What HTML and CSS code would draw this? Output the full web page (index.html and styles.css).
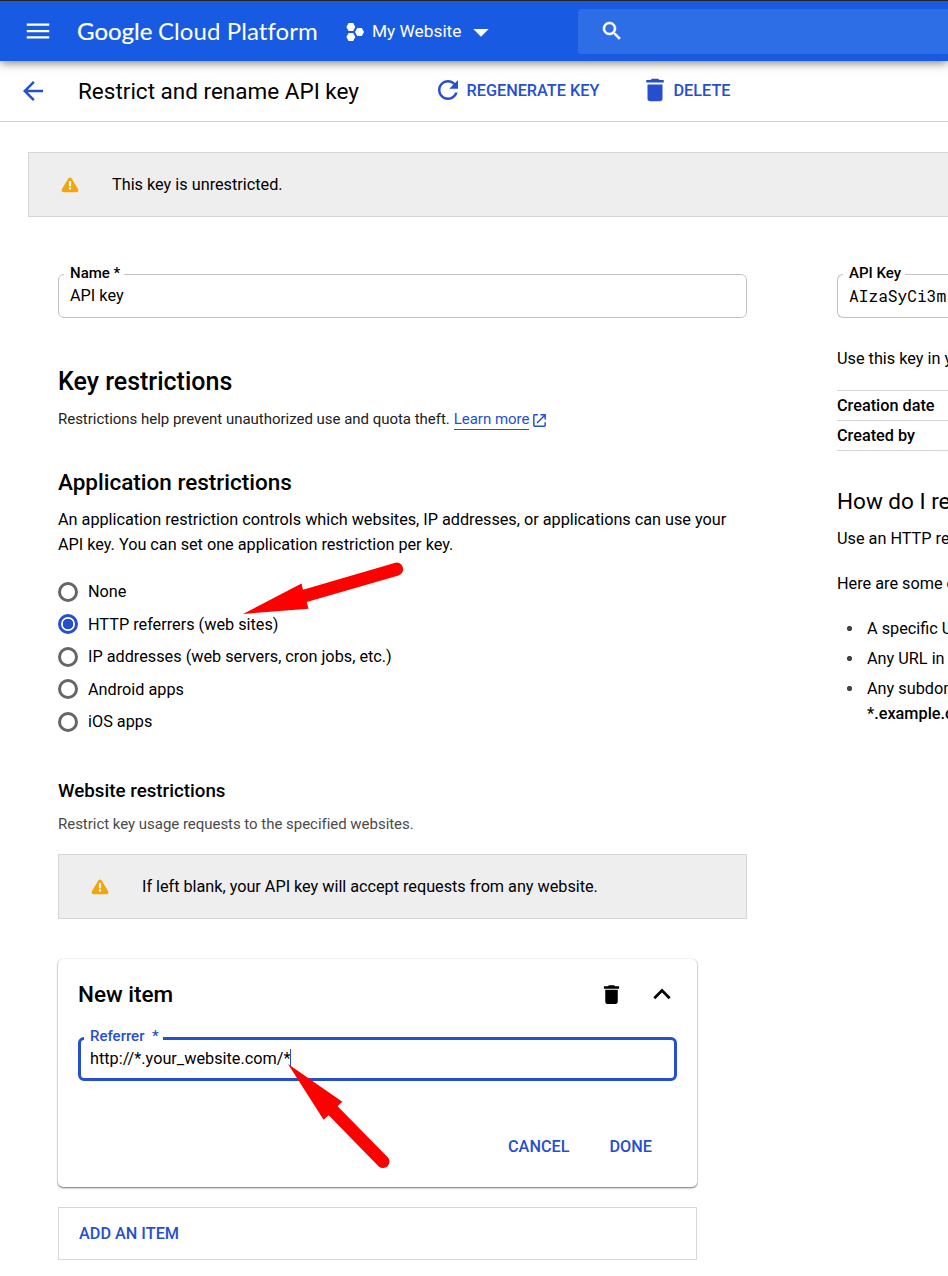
FILE: index.html
```html
<!DOCTYPE html>
<html lang="en">
<head>
<meta charset="utf-8">
<title>Restrict and rename API key</title>
<link rel="stylesheet" href="styles.css">
</head>
<body>
<div class="page">
  <header class="topbar">
    <svg class="icon menu" viewBox="0 0 24 24"><path d="M3 18h18v-1.800H3V18zm0-5.100h18v-1.800H3v1.800zM3 6v1.800h18V6H3z"/></svg>
    <div class="brand"><span class="brand-google">Google</span><span class="brand-cloud">Cloud Platform</span></div>
    <div class="project">
      <svg class="hex" viewBox="0 0 18 20"><path d="M2.600 1h4.600l2.100 4-2.100 4H2.600L.4 5zM2.600 11h4.600l2.100 4-2.100 4H2.600L.4 15zM11.200 6h4.600L18 10l-2.200 4h-4.600L9 10z"/></svg>
      <span class="project-name">My Website</span>
      <svg class="caret" viewBox="0 0 16 8"><path d="M.3 0h15.400L8 7.800z"/></svg>
    </div>
    <div class="search">
      <svg class="icon-search" viewBox="0 0 24 24"><path d="M15.5 14h-.79l-.28-.27C15.41 12.59 16 11.11 16 9.5 16 5.91 13.09 3 9.5 3S3 5.91 3 9.5 5.91 16 9.5 16c1.61 0 3.09-.59 4.23-1.57l.27.28v.79l5 4.99L20.49 19l-4.99-5zm-6 0C7.01 14 5 11.99 5 9.5S7.01 5 9.5 5 14 7.01 14 9.5 11.99 14 9.5 14z"/></svg>
    </div>
  </header>
  <div class="toolbar">
    <svg class="icon back" viewBox="0 0 24 24"><path d="M20 11H7.83l5.59-5.59L12 4l-8 8 8 8 1.41-1.41L7.83 13H20v-2z"/></svg>
    <h1 class="title">Restrict and rename API key</h1>
    <a class="tool regenerate"><svg class="icon" viewBox="0 0 24 24"><path d="M17.65 6.35C16.2 4.9 14.21 4 12 4c-4.42 0-7.99 3.58-7.99 8s3.57 8 7.99 8c3.73 0 6.84-2.55 7.73-6h-2.08c-.82 2.33-3.04 4-5.65 4-3.31 0-6-2.69-6-6s2.69-6 6-6c1.66 0 3.14.69 4.22 1.78L13 11h7V4l-2.35 2.35z"/></svg><span class="regenerate-text">REGENERATE KEY</span></a>
    <a class="tool delete"><svg class="icon" viewBox="0 0 24 24"><path d="M6 19c0 1.1.9 2 2 2h8c1.1 0 2-.9 2-2V7.600H6V19zM19 4h-3.500l-1-1h-5l-1 1H5v2h14V4z"/></svg><span class="delete-text">DELETE</span></a>
  </div>
  <div class="notice notice-top">
    <svg class="warn" viewBox="0 0 18 16"><path class="warn-fill" d="M7.300 1.500Q9-.6 10.700 1.500L17.200 12.300Q18 15.200 15.300 15.200H2.700Q0 15.200.8 12.300z"/><path class="warn-mark" d="M7.900 4h2.200v5.300H7.900zM7.900 10.600h2.200v2H7.900z"/></svg>
    <span class="notice-text-top">This key is unrestricted.</span>
  </div>
  <div class="columns">
    <main class="main">
      <div class="field"><label class="label">Name *</label><span class="value">API key</span></div>
      <h2 class="h-key">Key restrictions</h2>
      <p class="help">Restrictions help prevent unauthorized use and quota theft. <a class="link">Learn more</a><svg class="ext" viewBox="0 0 14 14"><path d="M5.200.9H1.600Q.9.900.9 1.600V12.400q0 .7.7.7H12.400q.7 0 .7-.7V8.800M8 .9h5.100V6M13 1 4.300 9.700"/></svg></p>
      <h3 class="h-app">Application restrictions</h3>
      <p class="body-text app-text">An application restriction controls which websites, IP addresses, or applications can use your<br>API key. You can set one application restriction per key.</p>
      <ul class="radios">
        <li class="radio"><i class="dot"></i>None</li>
        <li class="radio"><i class="dot dot-on"></i>HTTP referrers (web sites)</li>
        <li class="radio"><i class="dot"></i>IP addresses (web servers, cron jobs, etc.)</li>
        <li class="radio"><i class="dot"></i>Android apps</li>
        <li class="radio"><i class="dot"></i>iOS apps</li>
      </ul>
      <h4 class="h-web">Website restrictions</h4>
      <p class="sub">Restrict key usage requests to the specified websites.</p>
      <div class="notice notice-inner">
        <svg class="warn" viewBox="0 0 18 16"><path class="warn-fill" d="M7.300 1.500Q9-.6 10.700 1.500L17.200 12.300Q18 15.200 15.300 15.200H2.700Q0 15.200.8 12.300z"/><path class="warn-mark" d="M7.900 4h2.200v5.300H7.900zM7.900 10.600h2.200v2H7.900z"/></svg>
        <span class="notice-text-inner">If left blank, your API key will accept requests from any website.</span>
      </div>
      <section class="card">
        <div class="card-head">
          <h3 class="card-title">New item</h3>
          <svg class="trash" viewBox="0 0 24 24"><path d="M6 19c0 1.100.9 2 2 2h8c1.100 0 2-.9 2-2V7.400H6V19zM19.300 4h-3.800l-1-1h-5l-1 1H4.700v2.400h14.600V4z"/></svg>
          <svg class="chevron" viewBox="0 0 18 12"><path d="M1.300 10.200 9 2.500l7.700 7.700"/></svg>
        </div>
        <div class="field field-active"><label class="label label-active">Referrer&nbsp; *</label><span class="value value-ref">http://*.your_website.com/*</span><i class="cursor"></i></div>
        <div class="actions"><a class="cancel">CANCEL</a><a class="done">DONE</a></div>
      </section>
      <div class="add"><span class="add-text">ADD AN ITEM</span></div>
    </main>
    <aside class="side">
      <div class="field"><label class="label label-api">API Key</label><span class="value mono">AIzaSyCi3m</span></div>
      <p class="body-text use">Use this key in y</p>
      <div class="meta"><div class="row">Creation date</div><div class="row">Created by</div></div>
      <h3 class="h-how">How do I re</h3>
      <p class="body-text">Use an HTTP re</p>
      <p class="body-text here">Here are some e</p>
      <ul class="bullets">
        <li class="bullet">A specific U</li>
        <li class="bullet">Any URL in</li>
        <li class="bullet">Any subdom<br><b class="strong">*.example.c</b></li>
      </ul>
    </aside>
  </div>
  <svg class="arrows" viewBox="0 0 948 1276">
    <path d="M243 614 301.500 583.500 303 589.800 394.500 562.900A6.600 6.600 0 0 1 398.500 575.500L306.700 602 308.500 608.700z"/>
    <path d="M288 1064 342.300 1101.700 337.600 1106.300 388.200 1157.700A6.500 6.500 0 0 1 379 1166.700L328.700 1115.300 323.600 1119.700z"/>
  </svg>
</div>
</body>
</html>
```
FILE: styles.css
```css
* { box-sizing: border-box; margin: 0; padding: 0; }
body { background: #fff; color: #000; font-family: Roboto, "Liberation Sans", sans-serif; font-size: 16.25px; line-height: 25px; }
ul { list-style: none; }
svg { display: block; flex: none; }
.page { position: relative; width: 948px; height: 1276px; overflow: hidden; white-space: nowrap; }
.icon { width: 30px; height: 30px; fill: currentColor; }

.topbar { position: relative; display: flex; align-items: center; height: 61px; border-top: 1px solid #222; background: #185ae1; color: #fff; padding-left: 23px; box-shadow: 0 1px 10px rgba(0,0,0,.6); }
.brand { display: flex; gap: 7px; width: 246px; margin-left: 24px; font-family: Lato, sans-serif; font-size: 24px; line-height: 30px; }
.brand-google { width: 74px; font-weight: 400; -webkit-text-stroke: .2px #fff; }
.brand-cloud { letter-spacing: .08px; }
.project { display: flex; align-items: center; width: 232px; margin-left: 23px; }
.hex { width: 18px; height: 20px; margin-top: 2px; fill: #fff; }
.project-name { width: 90px; margin-left: 8px; font-size: 17.3px; }
.caret { width: 16px; height: 8px; margin: 4px 0 0 11px; fill: #fff; }
.search { flex: 1; height: 45px; border-radius: 3px 0 0 3px; background: #2d6de6; padding: 10px 21.5px; }
.icon-search { width: 24px; height: 24px; fill: #fff; stroke: #fff; stroke-width: .5; }

.toolbar { display: flex; align-items: center; height: 61px; border-bottom: 1px solid #d2d2d2; padding-left: 18px; color: #264fd0; }
.title { width: 355px; margin-left: 30px; font-size: 22.5px; font-weight: 400; color: #000; }
.tool { display: flex; align-items: center; font-weight: 500; margin-top: -2px; }
.regenerate { width: 207px; }
.regenerate-text { margin-left: 3.5px; }
.delete-text { margin-left: 3.5px; }

.notice { display: flex; align-items: center; height: 65px; border: 1px solid #d5d5d5; background: #eee; padding-left: 32px; }
.notice-top { margin: 30px 0 0 28px; border-right: 0; }
.notice-text-inner { letter-spacing: -.025px; }
.warn { width: 18px; height: 16px; margin: 1px 33px 0 0; }
.warn-fill { fill: #f2a60d; }
.warn-mark { fill: #fff; }

.columns { display: grid; grid-template-columns: 689px 111px; column-gap: 90px; padding: 57px 0 0 58px; }
.field { position: relative; height: 44px; border: 1px solid #c2c2c2; border-radius: 6px; padding: 8px 11px; }
.side .field { border-right: 0; border-radius: 6px 0 0 6px; }
.label { position: absolute; left: 5px; top: -11px; height: 18px; padding: 0 4px 0 6px; background: #fff; font-size: 15px; line-height: 18px; font-weight: 500; }
.value { display: inline-block; }
.mono { font-family: "Roboto Mono", "DejaVu Sans Mono", monospace; font-size: 16.2px; }

.h-key { margin-top: 49px; font-size: 25px; line-height: 30px; font-weight: 500; }
.help { display: flex; margin-top: 12px; font-size: 15px; line-height: 20px; letter-spacing: -.023px; color: #212121; }
.link { height: 21px; margin-left: 4px; border-bottom: 1px solid #264fd0; color: #264fd0; }
.ext { width: 13px; height: 13px; margin: 5px 0 0 4px; fill: none; stroke: #264fd0; stroke-width: 1.6; }
.h-app { margin-top: 37px; font-size: 22.5px; line-height: 30px; font-weight: 500; }
.app-text { margin-top: 10px; letter-spacing: -.016px; }
.radios { margin-top: 18.4px; }
.radio { display: flex; align-items: center; height: 32.5px; }
.dot { width: 20px; height: 20px; margin-right: 10px; border: 3px solid #666; border-radius: 50%; }
.dot-on { border-color: #264fd0; background: radial-gradient(circle, #264fd0 5px, #fff 5.6px); }
.h-web { margin-top: 40.9px; font-size: 18.75px; font-weight: 500; }
.sub { margin-top: 10.5px; font-size: 15px; line-height: 20px; letter-spacing: -.03px; color: #4a4a4a; }
.notice-inner { margin-top: 20px; }

.card { width: 639px; height: 228px; margin-top: 40px; border-radius: 5px; padding: 20px; box-shadow: 0 1px 2px rgba(0,0,0,.55), 0 0 1px rgba(0,0,0,.2); }
.card-head { display: flex; align-items: center; height: 30px; }
.card-title { flex: 1; font-size: 22.5px; font-weight: 500; }
.trash { width: 25px; height: 25px; }
.chevron { width: 18px; height: 12px; margin: 0 6px 0 29px; fill: none; stroke: #000; stroke-width: 2.7; }
.field-active { display: flex; margin-top: 28px; border: 3px solid #264fd0; padding: 6px 9px; }
.label-active { left: 3px; top: -13px; padding: 0 4px 0 6px; color: #264fd0; }
.cursor { width: 1px; height: 18px; margin-top: 3px; background: #264fd0; }
.actions { display: flex; justify-content: flex-end; gap: 40px; margin: 53px 25px 0 0; color: #264fd0; font-weight: 500; }
.add { display: flex; align-items: center; width: 639px; height: 53px; margin-top: 20px; border: 1px solid #d8d8d8; padding-left: 20px; color: #264fd0; font-weight: 500; }

.use { margin-top: 28px; }
.meta { margin-top: 19px; border-bottom: 1px solid #d5d5d5; font-weight: 500; }
.row { height: 30px; border-top: 1px solid #d5d5d5; line-height: 29px; }
.h-how { margin: 35px 0 10px; font-size: 22.5px; line-height: 30px; font-weight: 400; }
.here { margin-top: 20px; }
.bullets { margin-top: 20px; }
.bullet { margin-bottom: 5px; padding-left: 30px; background: radial-gradient(circle at 12.5px 12.5px, #444 2.2px, transparent 3px); }
.strong { font-weight: 500; }
.arrows { position: absolute; left: 0; top: 0; width: 948px; height: 1276px; fill: #fe0000; pointer-events: none; }
```
